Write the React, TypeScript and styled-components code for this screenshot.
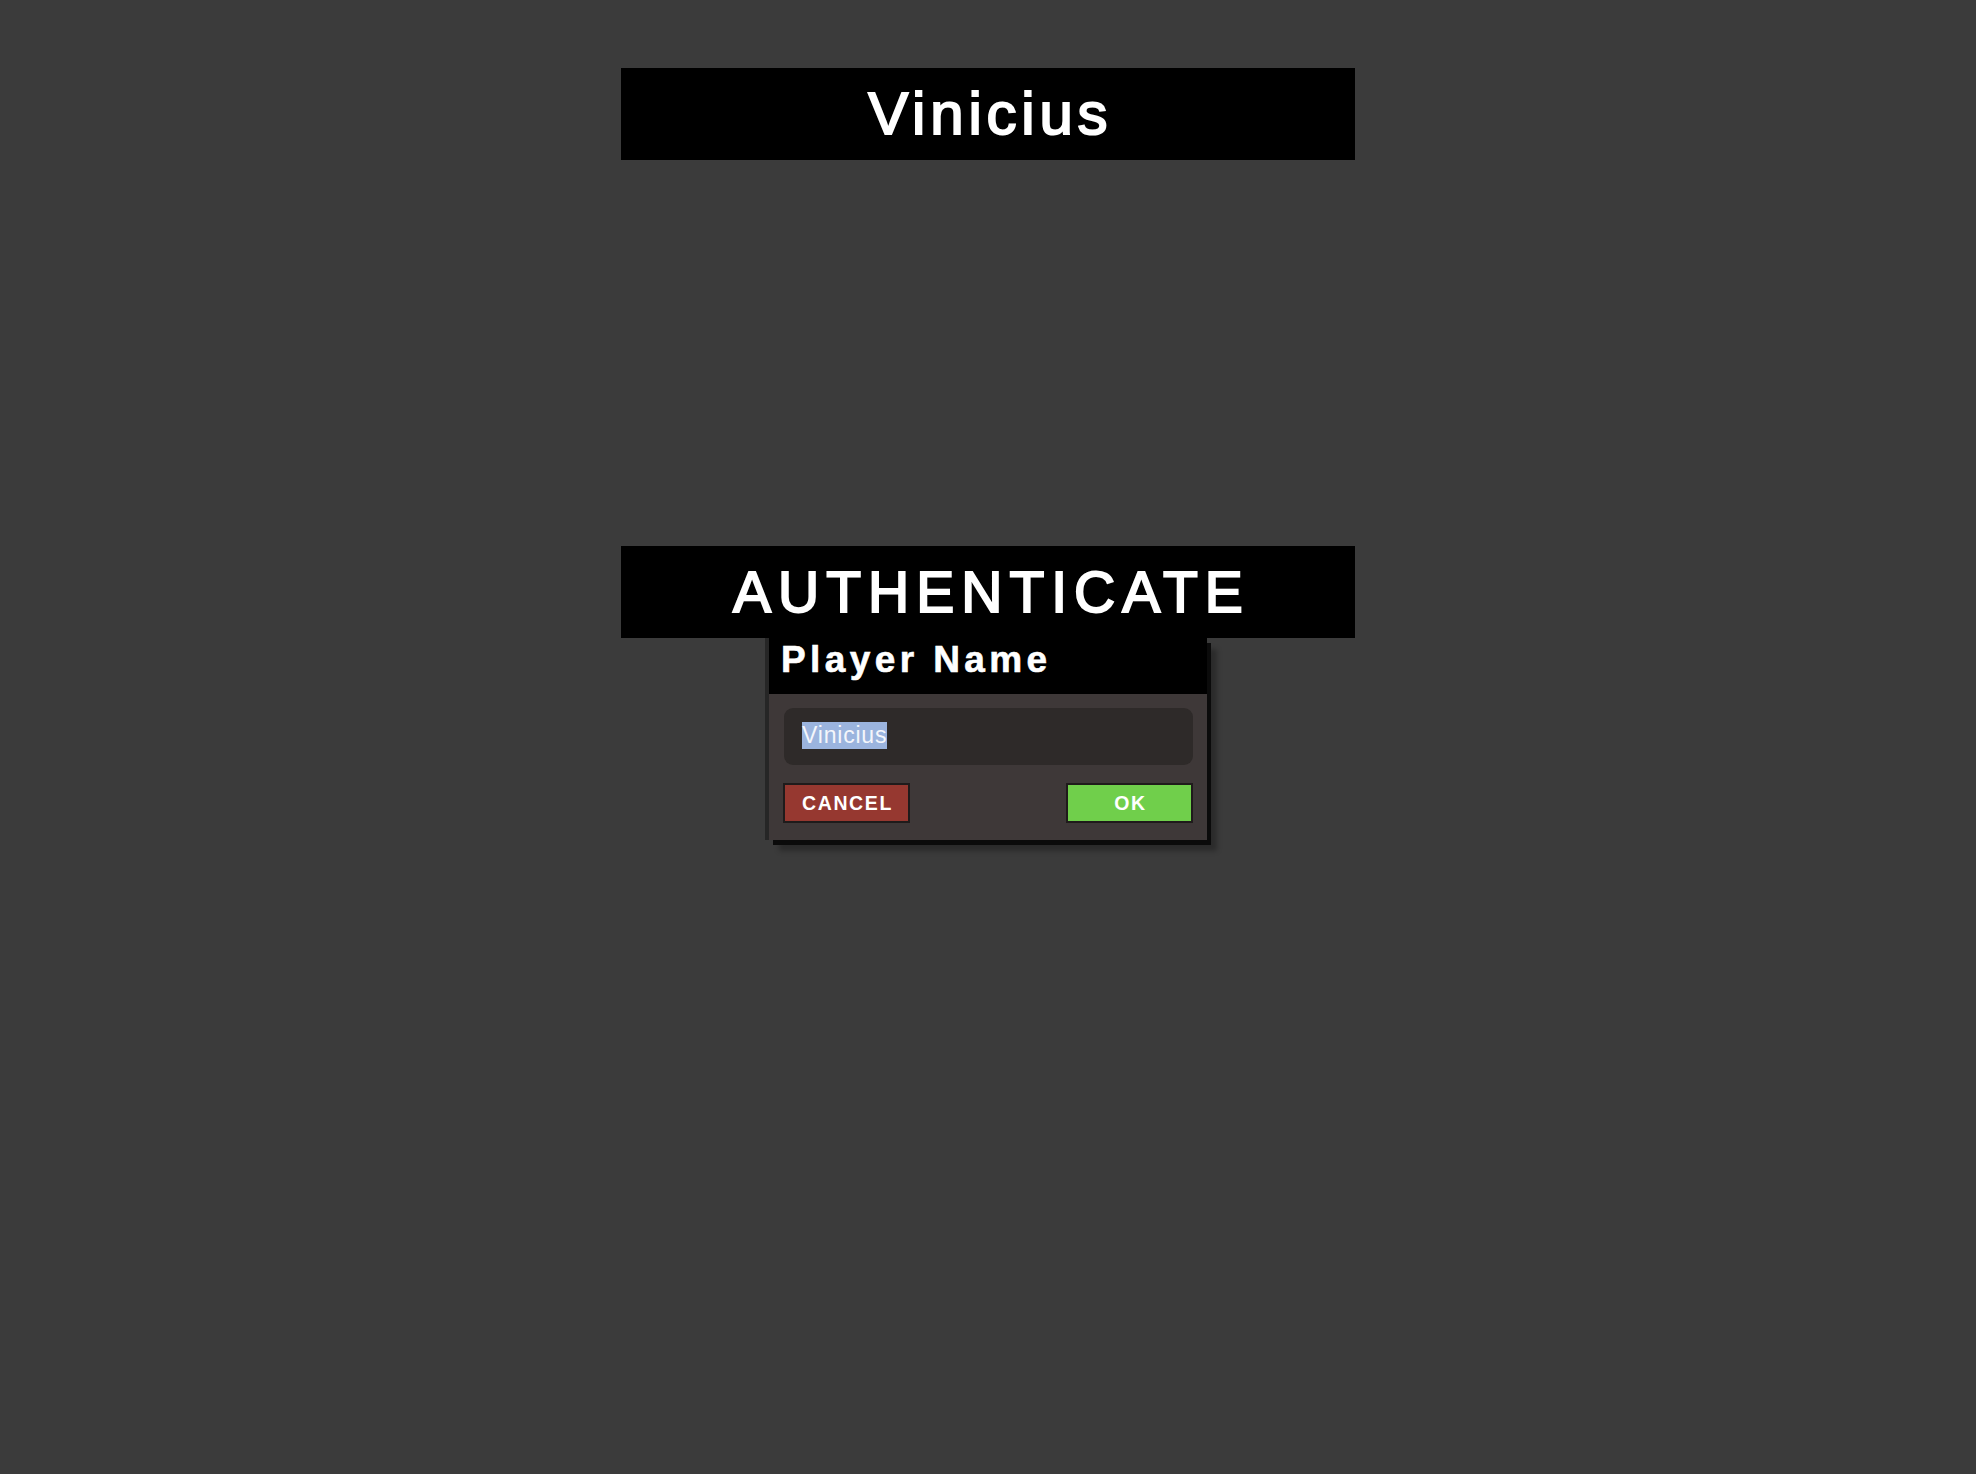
import React from "react";
import styled, { createGlobalStyle } from "styled-components";

const GlobalStyle = createGlobalStyle`
  html, body {
    margin: 0;
    padding: 0;
    background: #3b3b3b;
  }
  body {
    min-height: 1474px;
    font-family: "Liberation Sans", Arial, sans-serif;
  }
`;

const Page = styled.div`
  display: flex;
  flex-direction: column;
  align-items: center;
  padding-top: 68px;
`;

const Banner = styled.div<{ spacing: number; size: number; gapTop?: number }>`
  width: 734px;
  height: 92px;
  margin-top: ${(props) => props.gapTop || 0}px;
  background: #000;
  display: flex;
  align-items: center;
  justify-content: center;
  color: #fff;
  font-family: "Liberation Sans", Arial, sans-serif;
  font-size: ${(props) => props.size}px;
  line-height: 1;
  letter-spacing: ${(props) => props.spacing}px;
  -webkit-text-stroke: 2px #fff;
  padding-left: ${(props) => props.spacing}px;
  box-sizing: border-box;
`;

const Dialog = styled.div`
  width: 438px;
  display: flex;
  flex-direction: column;
  box-shadow: -4px 0 0 #262626, 4px 5px 0 #0b0b0b, 10px 11px 5px rgba(0, 0, 0, 0.28);
`;

const DialogHeader = styled.div`
  height: 56px;
  background: #000;
  color: #fff;
  padding: 1px 12px 0;
  font-family: "Liberation Sans", Arial, sans-serif;
  font-weight: bold;
  font-size: 37px;
  letter-spacing: 4.4px;
  line-height: 41px;
  -webkit-text-stroke: 0.6px #fff;
  box-sizing: border-box;
`;

const DialogBody = styled.div`
  background: #3e3838;
  padding: 14px 14px 17px;
  display: flex;
  flex-direction: column;
  gap: 18px;
`;

const NameField = styled.div`
  height: 57px;
  margin: 0 0 0 1px;
  background: #2e2a29;
  border-radius: 9px;
  display: flex;
  align-items: center;
  padding-left: 18px;
  padding-bottom: 3px;
  box-sizing: border-box;
`;

const Selected = styled.span`
  background: #9bb4de;
  color: #f4f6fb;
  font-family: "Liberation Sans", Arial, sans-serif;
  font-size: 23px;
  letter-spacing: 0.8px;
  line-height: 27px;
`;

const ButtonRow = styled.div`
  display: flex;
  justify-content: space-between;
`;

const ActionButton = styled.button<{ tone: "cancel" | "ok" }>`
  width: 127px;
  height: 40px;
  margin: 0;
  padding: 0 0 0 2px;
  border: 2px solid #1f1b1b;
  background: ${(props) => (props.tone === "cancel" ? "#963830" : "#70cf4b")};
  color: #fff;
  font-family: "Liberation Sans", Arial, sans-serif;
  font-weight: bold;
  font-size: 19.5px;
  letter-spacing: 1.6px;
  box-sizing: border-box;
  cursor: pointer;
`;

export default function App() {
  return (
    <>
      <GlobalStyle />
      <Page>
        <Banner size={60} spacing={4.8}>
          Vinicius
        </Banner>
        <Banner size={57} spacing={7} gapTop={386}>
          AUTHENTICATE
        </Banner>
        <Dialog>
          <DialogHeader>Player Name</DialogHeader>
          <DialogBody>
            <NameField>
              <Selected>Vinicius</Selected>
            </NameField>
            <ButtonRow>
              <ActionButton tone="cancel">CANCEL</ActionButton>
              <ActionButton tone="ok">OK</ActionButton>
            </ButtonRow>
          </DialogBody>
        </Dialog>
      </Page>
    </>
  );
}
